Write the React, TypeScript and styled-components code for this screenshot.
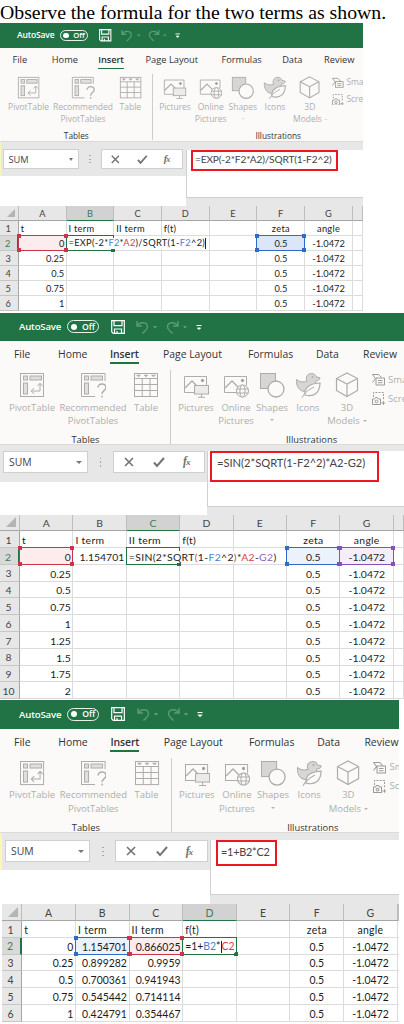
import React from "react";
import styled, { createGlobalStyle, css } from "styled-components";

/* Every sheet sets --u, the length of one design unit, so the same parts serve both zoom levels. */
const u = (n: number) => `calc(var(--u) * ${n})`;

const UI = `"Open Sans", "Noto Sans", sans-serif`;
const CELL = `Lato, "Open Sans", sans-serif`;
const GREEN = "#217346";
const RED = "#c9364a";
const BLUE = "#2f6bc9";
const PURPLE = "#8552b8";

const GlobalStyle = createGlobalStyle`
  body { margin: 0; background: #fff; overflow: hidden; }
  * { box-sizing: border-box; }
`;

const Page = styled.main`
  width: 404px;
  height: 1024px;
  overflow: hidden;
  display: flex;
  flex-direction: column;
  align-items: flex-start;
`;

const Heading = styled.h1`
  margin: 0;
  padding-left: 0;
  height: 22.7px;
  font: 400 19.8px/24px "Liberation Serif", serif;
  color: #000;
  white-space: nowrap;
`;

const Sheet = styled.section<{ $unit: number; $width: number; $height: number }>`
  --u: ${(p) => p.$unit}px;
  width: ${(p) => p.$width}px;
  height: ${(p) => p.$height}px;
  flex: none;
  overflow: hidden;
  font-family: ${UI};
`;

/* Title bar */
const TitleBar = styled.header`
  height: ${u(28.5)};
  background: ${GREEN};
  display: flex;
  align-items: center;
  padding-left: ${u(19)};
  color: #fff;
  font-size: ${u(9.6)};
  white-space: nowrap;
`;
const SaveLabel = styled.span`
  width: ${u(48)};
  font-weight: 600;
  letter-spacing: -0.02em;
`;
const Toggle = styled.span`
  width: ${u(32)};
  height: ${u(13)};
  border: 1px solid #e8f1ec;
  border-radius: ${u(7)};
  display: flex;
  align-items: center;
  gap: ${u(5)};
  padding-left: ${u(3)};
  font-size: ${u(8.6)};
  line-height: 1;
  font-weight: 600;
  margin-right: ${u(12)};
`;
const Knob = styled.i`
  width: ${u(6)};
  height: ${u(6)};
  border-radius: 50%;
  background: #fff;
`;
const BarIcon = styled.svg<{ $w: number; $gap: number; $dim?: boolean }>`
  width: ${(p) => u(p.$w)};
  height: ${u(14)};
  margin-right: ${(p) => u(p.$gap)};
  flex: none;
  fill: none;
  stroke: ${(p) => (p.$dim ? "#5a9a77" : "#fff")};
`;

/* Ribbon */
const Ribbon = styled.div<{ $h: number; $line?: boolean }>`
  height: ${(p) => p.$h}px;
  background: #fbfaf9;
  border-bottom: 1px solid ${(p) => (p.$line ? "#e3e0a4" : "#dcdbda")};
  display: flex;
  flex-direction: column;
`;
const Tabs = styled.nav`
  display: grid;
  grid-template-columns: ${[44, 52, 53, 85, 68, 47, 60].map(u).join(" ")};
  padding-left: ${u(14)};
  height: ${u(29)};
  font-size: ${u(10.4)};
  color: #333;
  white-space: nowrap;
`;
const Tab = styled.span<{ $active?: boolean }>`
  justify-self: start;
  height: ${u(23)};
  line-height: ${u(27)};
  border-bottom: ${u(2)} solid ${(p) => (p.$active ? GREEN : "transparent")};
  font-weight: ${(p) => (p.$active ? 600 : 400)};
  letter-spacing: ${(p) => (p.$active ? "-0.01em" : "0")};
`;
const Groups = styled.div`
  display: flex;
  flex: 1;
`;
const Group = styled.div<{ $w: number; $rule?: boolean }>`
  width: ${(p) => u(p.$w)};
  flex: none;
  height: ${u(74)};
  display: flex;
  flex-direction: column;
  border-right: ${(p) => (p.$rule ? "1px solid #cdcccb" : "0")};
`;
const Tools = styled.div`
  display: flex;
  height: ${u(63.2)};
  flex: none;
  padding-top: ${u(2)};
`;
const Tool = styled.div<{ $w: number; $ml: number }>`
  width: ${(p) => u(p.$w)};
  margin-left: ${(p) => u(p.$ml)};
  flex: none;
  display: flex;
  flex-direction: column;
  align-items: center;
  font-size: ${u(9.5)};
  line-height: ${u(13.4)};
  color: #b0aeac;
  white-space: nowrap;
`;
const ToolIcon = styled.svg`
  width: ${u(26)};
  height: ${u(26)};
  margin-bottom: ${u(2.4)};
  flex: none;
  fill: none;
  stroke: #aeacaa;
`;
const GroupName = styled.div<{ $indent: number }>`
  flex: none;
  padding-left: ${(p) => u(p.$indent)};
  font-size: ${u(9.3)};
  line-height: ${u(14)};
  color: #333;
`;
const SmallTools = styled.div`
  margin-left: ${u(4)};
  display: flex;
  flex-direction: column;
`;
const SmallTool = styled.div`
  display: flex;
  align-items: center;
  gap: ${u(3)};
  height: ${u(19)};
  margin-top: ${u(-1)};
  padding-bottom: ${u(2)};
  font-size: ${u(9.5)};
  line-height: 1;
  color: #b0aeac;
  & + & { margin-top: 0; }
`;
const SmallIcon = styled.svg`
  width: ${u(13)};
  height: ${u(13)};
  flex: none;
  fill: none;
  stroke: #9d9b99;
`;
const Arrow = styled.i`
  display: inline-block;
  border: ${u(2)} solid transparent;
  border-top-color: #b3b1af;
  border-bottom: 0;
  margin-left: ${u(3)};
  vertical-align: middle;
`;
const ArrowBelow = styled(Arrow)`
  margin: ${u(5)} 0 0;
`;

/* Formula bar */
const FormulaZone = styled.div<{ $h: number; $left: number }>`
  height: ${(p) => p.$h}px;
  display: grid;
  grid-template-columns: ${(p) => p.$left}px 1fr;
`;
const Controls = styled.div<{ $h: number; $pad: number; $top: number; $strip: number }>`
  height: ${(p) => p.$h}px;
  padding-left: ${(p) => p.$pad - p.$strip}px;
  padding-top: ${(p) => p.$top}px;
  border-left: ${(p) => p.$strip}px solid #fbf7b4;
  background: #e8e7e7;
  display: flex;
`;
const NameBox = styled.div`
  width: ${u(85)};
  height: ${u(22)};
  border: 1px solid #d0cfcf;
  background: #fff;
  display: flex;
  align-items: center;
  justify-content: space-between;
  padding: 0 ${u(5)};
  font-size: ${u(10.4)};
  color: #444;
`;
const NameArrow = styled.i`
  border: ${u(3)} solid transparent;
  border-top: ${u(3.5)} solid #777;
  border-bottom: 0;
`;
const Dots = styled.div`
  width: ${u(25)};
  height: ${u(22)};
  display: flex;
  flex-direction: column;
  align-items: center;
  justify-content: center;
  gap: ${u(2.4)};
  i { width: 1.4px; height: 1.4px; background: #aaa; }
`;
const Buttons = styled.div`
  width: ${u(92)};
  height: ${u(22)};
  border: 1px solid #d0cfcf;
  background: #fff;
  display: flex;
  align-items: center;
  padding-left: ${u(9)};
  gap: ${u(18)};
`;
const Glyph = styled.svg`
  width: ${u(12)};
  height: ${u(12)};
  fill: none;
  stroke: #737373;
  stroke-width: 1.6;
`;
const Fx = styled.span`
  font: italic 700 ${u(11.5)}/1 "Liberation Serif", serif;
  color: #707070;
  letter-spacing: -0.08em;
  small { font-size: 0.8em; }
`;
const InputSide = styled.div<{ $top: number; $bottom: number }>`
  background: #e8e7e7;
  padding: ${(p) => `${p.$top}px 0 ${p.$bottom}px`};
`;
const Input = styled.div<{ $pad: number }>`
  height: 100%;
  background: #fff;
  border-left: 1px solid #d0cfcf;
  border-bottom: 1px solid #cfcfcf;
  padding-left: ${(p) => p.$pad}px;
`;
const Marked = styled.div<{ $w: number; $h: number; $size: number; $pad: number; $indent: number; $ls: number }>`
  width: ${(p) => p.$w}px;
  height: ${(p) => p.$h}px;
  border: 2px solid #ee1620;
  padding: ${(p) => p.$pad}px 0 0 ${(p) => p.$indent}px;
  font: 400 ${(p) => p.$size}px/14px ${CELL};
  letter-spacing: ${(p) => p.$ls}px;
  color: #444;
  white-space: nowrap;
`;

/* Cells */
const Grid = styled.div<{ $head: number; $left: number }>`
  --cols: ${(p) => p.$head}px repeat(7, ${u(53.4)}) 1fr;
  margin-left: ${(p) => p.$left}px;
  font-family: ${CELL};
  font-size: ${u(10.4)};
  color: #1c1c1c;
`;
const HeadRow = styled.div<{ $h: number }>`
  display: grid;
  grid-template-columns: var(--cols);
  height: ${(p) => p.$h}px;
  background: #e8e7e7;
`;
const ColHead = styled.div<{ $on?: boolean }>`
  display: flex;
  align-items: center;
  justify-content: center;
  padding-top: ${u(1)};
  border-right: 1px solid #bdbdbd;
  border-bottom: ${(p) => (p.$on ? `1.5px solid ${GREEN}` : "1px solid #a6a6a6")};
  background: ${(p) => (p.$on ? "#d2d2d2" : "transparent")};
  color: ${(p) => (p.$on ? "#3b7d58" : "#444")};
`;
const Corner = styled(ColHead)`
  justify-content: flex-end;
  align-items: flex-end;
  padding: 0 ${u(3)} ${u(3)} 0;
  i { border: ${u(5)} solid; border-color: transparent #b4b4b4 #b4b4b4 transparent; }
`;
const Row = styled.div`
  display: grid;
  grid-template-columns: var(--cols);
  height: ${u(16.8)};
`;
const RowHead = styled.div<{ $on?: boolean }>`
  display: flex;
  align-items: center;
  justify-content: center;
  padding: ${u(1.4)} ${u(2)} 0 0;
  background: ${(p) => (p.$on ? "#d9d9d9" : "#e8e7e7")};
  border-right: ${(p) => (p.$on ? `2px solid ${GREEN}` : "1px solid #a6a6a6")};
  border-bottom: 1px solid #c6c6c6;
  color: ${(p) => (p.$on ? "#3b7d58" : "#444")};
`;
type Align = "left" | "center" | "right";
const Cell = styled.div<{ $align: Align; $label?: boolean }>`
  position: relative;
  min-width: 0;
  display: flex;
  align-items: center;
  justify-content: ${(p) => ({ left: "flex-start", center: "center", right: "flex-end" })[p.$align]};
  padding: ${u(1.8)} ${u(1.6)} 0 ${u(2)};
  letter-spacing: ${(p) => (p.$label ? "0.03em" : "0")};
  border-right: 1px solid #dcdcdc;
  border-bottom: 1px solid #dcdcdc;
  white-space: nowrap;
`;
const Outline = styled.div<{ $color: string; $fill: string }>`
  position: absolute;
  z-index: 1;
  inset: -1px;
  border: 1.6px solid ${(p) => p.$color};
  background: ${(p) => p.$fill};
`;
const Handle = styled.i<{ $color: string; $at: "tl" | "tr" | "bl" | "br" }>`
  position: absolute;
  z-index: 2;
  width: 4px;
  height: 4px;
  background: ${(p) => p.$color};
  ${(p) => (p.$at[0] === "t" ? css`top: -2px;` : css`bottom: -2px;`)}
  ${(p) => (p.$at[1] === "l" ? css`left: -2px;` : css`right: -2px;`)}
`;
const Over = styled.span`
  position: relative;
  z-index: 3;
`;
const Editing = styled.span<{ $ls: number }>`
  position: relative;
  z-index: 4;
  background: #fff;
  line-height: ${u(12)};
  letter-spacing: ${(p) => p.$ls}px;
`;
const Ink = styled.span<{ $c: string }>`
  color: ${(p) => p.$c};
`;
const Caret = styled.i`
  display: inline-block;
  width: 1px;
  height: ${u(12)};
  background: #222;
  vertical-align: middle;
`;

const PivotIcon = ({ ask }: { ask?: boolean }) => (
  <ToolIcon viewBox="0 0 26 26">
    {ask ? <path d="M25 9V1.5H1.5V24.5H15" /> : <rect x="1.5" y="1.5" width="23" height="23" />}
    <rect x="4.5" y="4" width="4" height="4" fill="#e0dfde" />
    <rect x="11" y="4" width="11.5" height="4" fill="#e0dfde" />
    <rect x="4.5" y="11" width="4" height="11" fill="#e0dfde" />
    {ask ? (
      <path d="M18 15.5c0-5 8-4.5 8 0 0 3.2-4 3-4 6.5M22 23.5v2" strokeWidth="1.4" />
    ) : (
      <path d="M21 11.5v7.5h-8.5M18.5 14l2.5-2.8 2.5 2.8M15.2 16l-3 3 3 3" />
    )}
  </ToolIcon>
);
const TableIcon = () => (
  <ToolIcon viewBox="0 0 26 26">
    <rect x="1.5" y="1.5" width="23" height="23" />
    <path d="M1.5 6.5h23M1.5 12.5h23M1.5 18.5h23M9.2 6.5v18M17 6.5v18" />
    <path d="M3.5 3h4l-2 2zM11 3h4l-2 2zM18.5 3h4l-2 2z" fill="#aeacaa" strokeWidth=".5" />
  </ToolIcon>
);
const PictureIcon = ({ online }: { online?: boolean }) => (
  <ToolIcon viewBox="0 0 26 26">
    <path d="M14 20.5H1.5v-16h22v9" />
    <path d="M2 16l7-7 6.5 6.5" strokeWidth="1.3" />
    <circle cx="19.5" cy="8.5" r="1.2" fill="#8f8d8b" />
    {online ? (
      <g fill="#fbfaf9">
        <circle cx="19.5" cy="19" r="6" />
        <ellipse cx="19.5" cy="19" rx="2.6" ry="6" />
        <path d="M13.5 17h12M13.5 21h12" />
      </g>
    ) : (
      <g>
        <rect x="11.5" y="13.5" width="14" height="8.5" fill="#ecebea" />
        <path d="M18.5 22v3M15 25.3h7" />
      </g>
    )}
  </ToolIcon>
);
const ShapesIcon = () => (
  <ToolIcon viewBox="0 0 26 26">
    <rect x="1.5" y="1.5" width="15" height="15" fill="#d7d6d5" />
    <circle cx="17" cy="17" r="8" fill="#fbfaf9" strokeWidth="1.3" />
  </ToolIcon>
);
const DuckIcon = () => (
  <ToolIcon viewBox="0 0 26 26">
    <path
      d="M1.5 7.5c3 2.500 7 3 10.500 1.800-2-4 .5-7.800 4.500-7.800 3 0 4.500 2 4.800 3.500l3.700.8c-.4 2.200-2 3-4.200 3.200-1 2 .7 2.500.2 6L9 19.500C4 18.500 1 14 1.500 7.500z"
      fill="#d7d6d5"
    />
    <path d="M25 11c-7 .5-16 2-15 12 9 2.500 15-2.500 15-12z" fill="#fbfaf9" strokeWidth="1.2" />
    <path d="M7 26c2-5 6-8 12-11" />
    <circle cx="17.500" cy="5" r=".6" />
  </ToolIcon>
);
const CubeIcon = () => (
  <ToolIcon viewBox="0 0 26 26">
    <path d="M13 1l10.500 5.500v12L13 24.500 2.500 18.500v-12zM2.500 6.500L13 12l10.500-5.500M13 12v12.500" strokeWidth="1.2" />
  </ToolIcon>
);

const Chrome = ({ ribbonHeight, line }: { ribbonHeight: number; line?: boolean }) => (
  <>
    <TitleBar>
      <SaveLabel>AutoSave</SaveLabel>
      <Toggle>
        <Knob />
        Off
      </Toggle>
      <BarIcon viewBox="0 0 14 14" $w={14} $gap={11}>
        <path d="M.7.700h12.600v12.600H2.200L.7 11.800zM3 .7v5h8v-5M3.500 13.300V9h7v4.300M6 11v2" strokeWidth="1.2" />
      </BarIcon>
      <BarIcon viewBox="0 0 13 14" $w={13} $gap={4} $dim>
        <path d="M1 1v5h5M1.200 6C4 1 11.500 2 11.500 7c0 3-3 4-5 6.500" strokeWidth="1.4" />
      </BarIcon>
      <BarIcon viewBox="0 0 4 14" $w={4} $gap={9} $dim>
        <path d="M.5 6.500h3L2 8z" />
      </BarIcon>
      <BarIcon viewBox="0 0 13 14" $w={13} $gap={4} $dim>
        <path d="M12 1v5H7M11.800 6C9 1 1.500 2 1.500 7c0 3 3 4 5 6.500" strokeWidth="1.4" />
      </BarIcon>
      <BarIcon viewBox="0 0 4 14" $w={4} $gap={9} $dim>
        <path d="M.5 6.500h3L2 8z" />
      </BarIcon>
      <BarIcon viewBox="0 0 6 14" $w={6} $gap={0}>
        <path d="M.5 5.500h5" />
        <path d="M1.500 8h3L3 9.500z" fill="#fff" />
      </BarIcon>
    </TitleBar>
    <Ribbon $h={ribbonHeight} $line={line}>
      <Tabs>
        <Tab>File</Tab>
        <Tab>Home</Tab>
        <Tab $active>Insert</Tab>
        <Tab>Page Layout</Tab>
        <Tab>Formulas</Tab>
        <Tab>Data</Tab>
        <Tab>Review</Tab>
      </Tabs>
      <Groups>
        <Group $w={171} $rule>
          <Tools>
            <Tool $w={48} $ml={8}>
              <PivotIcon />
              PivotTable
            </Tool>
            <Tool $w={70} $ml={2}>
              <PivotIcon ask />
              <span>Recommended</span>
              <span>PivotTables</span>
            </Tool>
            <Tool $w={26} $ml={5}>
              <TableIcon />
              Table
            </Tool>
          </Tools>
          <GroupName $indent={71.5}>Tables</GroupName>
        </Group>
        <Group $w={260}>
          <Tools>
            <Tool $w={36} $ml={7}>
              <PictureIcon />
              Pictures
            </Tool>
            <Tool $w={36} $ml={4}>
              <PictureIcon online />
              <span>Online</span>
              <span>Pictures</span>
            </Tool>
            <Tool $w={34} $ml={1}>
              <ShapesIcon />
              <span>Shapes</span>
              <ArrowBelow />
            </Tool>
            <Tool $w={28} $ml={5}>
              <DuckIcon />
              Icons
            </Tool>
            <Tool $w={42} $ml={4}>
              <CubeIcon />
              <span>3D</span>
              <span>
                Models
                <Arrow />
              </span>
            </Tool>
            <SmallTools>
              <SmallTool>
                <SmallIcon viewBox="0 0 13 13">
                  <path d="M.5 1.500h6l3 3M.5 9.500l3-4-3-4M4 5h8.500v7H4z" />
                  <path d="M6 7.500h4.500M6 9.700h4.500" />
                </SmallIcon>
                Sma
              </SmallTool>
              <SmallTool>
                <SmallIcon viewBox="0 0 13 13">
                  <path d="M1.500 5V.5h10V8" strokeDasharray="2 1.200" />
                  <path d="M.5 7h2l1-1.500h2L6.500 7h2v5.500h-8zM9.500 11h3.500M11.500 9.200v3.600" />
                  <circle cx="4.500" cy="9.500" r="1.400" />
                </SmallIcon>
                Scre
              </SmallTool>
            </SmallTools>
          </Tools>
          <GroupName $indent={115}>Illustrations</GroupName>
        </Group>
      </Groups>
    </Ribbon>
  </>
);

interface Bar {
  height: number;
  left: number;
  controls: number;
  pad: number;
  padTop: number;
  strip: number;
  top: number;
  bottom: number;
  inset: number;
  box: [number, number];
  size: number;
  textTop: number;
  indent: number;
  ls: number;
  text: string;
}
const FormulaBar = ({ b }: { b: Bar }) => (
  <FormulaZone $h={b.height} $left={b.left}>
    <Controls $h={b.controls} $pad={b.pad} $top={b.padTop} $strip={b.strip}>
      <NameBox>
        SUM
        <NameArrow />
      </NameBox>
      <Dots>
        <i />
        <i />
        <i />
      </Dots>
      <Buttons>
        <Glyph viewBox="0 0 12 12">
          <path d="M2 2l8 8M10 2l-8 8" />
        </Glyph>
        <Glyph viewBox="0 0 12 12">
          <path d="M1 6.500l3 3.500 7-8" strokeWidth="2" />
        </Glyph>
        <Fx>
          f<small>x</small>
        </Fx>
      </Buttons>
    </Controls>
    <InputSide $top={b.top} $bottom={b.bottom}>
      <Input $pad={b.inset}>
        <Marked $w={b.box[0]} $h={b.box[1]} $size={b.size} $pad={b.textTop} $indent={b.indent} $ls={b.ls}>
          {b.text}
        </Marked>
      </Input>
    </InputSide>
  </FormulaZone>
);

interface Mark {
  color: string;
  fill: string;
  handles: ("tl" | "tr" | "bl" | "br")[];
}
const ALL: Mark["handles"] = ["tl", "tr", "bl", "br"];
const red: Mark = { color: RED, fill: "#fdeced", handles: ALL };
const blue: Mark = { color: BLUE, fill: "#ebf2fc", handles: ALL };
const blueDeep: Mark = { ...blue, fill: "#dbe6f8" };
const purple: Mark = { color: PURPLE, fill: "#f4eefa", handles: ALL };
const active: Mark = { color: GREEN, fill: "#fff", handles: ["br"] };

interface GridProps {
  head: number;
  left: number;
  headHeight: number;
  activeCol: string;
  rows: string[][];
  marks: Record<number, Mark>;
  editAt: number;
  edit: React.ReactNode;
  editSpacing: number;
}
const LETTERS = ["A", "B", "C", "D", "E", "F", "G"];
const Cells = (g: GridProps) => (
  <Grid $head={g.head} $left={g.left}>
    <HeadRow $h={g.headHeight}>
      <Corner>
        <i />
      </Corner>
      {LETTERS.map((l) => (
        <ColHead key={l} $on={l === g.activeCol}>
          {l}
        </ColHead>
      ))}
      <ColHead />
    </HeadRow>
    {g.rows.map((row, r) => (
      <Row key={r}>
        <RowHead $on={r === 1}>{r + 1}</RowHead>
        {LETTERS.map((l, c) => {
          const mark = r === 1 ? g.marks[c] : undefined;
          const align: Align = c > 4 ? "center" : r === 0 || (r === 1 && c === g.editAt) ? "left" : "right";
          return (
            <Cell key={l} $align={align} $label={r === 0}>
              {mark && <Outline $color={mark.color} $fill={mark.fill} />}
              {mark?.handles.map((h) => <Handle key={h} $color={mark.color} $at={h} />)}
              {r === 1 && c === g.editAt ? <Editing $ls={g.editSpacing}>{g.edit}</Editing> : row[c] && <Over>{row[c]}</Over>}
            </Cell>
          );
        })}
        <Cell $align="left" />
      </Row>
    ))}
  </Grid>
);

const HEAD = ["t", "I term", "II term", "f(t)", "", "zeta", "angle"];
const line = (t: string, i = "", ii = "") => [t, i, ii, "", "", "0.5", "-1.0472"];

export default function App() {
  return (
    <>
      <GlobalStyle />
      <Page>
        <Heading>Observe the formula for the two terms as shown.</Heading>
        <Sheet $unit={0.893} $width={363} $height={290}>
          <Chrome ribbonHeight={93.8} line />
          <FormulaBar
            b={{
              height: 63.8, left: 186, controls: 34, pad: 3, padTop: 7.5, strip: 1, top: 8, bottom: 8, inset: 4,
              box: [147, 21], size: 10.2, textTop: 0.5, indent: 2, ls: -0.18, text: "=EXP(-2*F2*A2)/SQRT(1-F2^2)",
            }}
          />
          <Cells
            head={19} left={0} headHeight={15} activeCol="B"
            rows={[HEAD, line("0"), line("0.25"), line("0.5"), line("0.75"), line("1")]}
            marks={{ 0: red, 1: active, 5: blueDeep }}
            editAt={1}
            editSpacing={0.3}
            edit={
              <>
                =EXP(-2*<Ink $c="#4a7fd6">F2</Ink>*<Ink $c="#d2414e">A2</Ink>)/SQRT(1-<Ink $c="#4a7fd6">F2</Ink>^2)
                <Caret />
              </>
            }
          />
        </Sheet>
        <Sheet $unit={1} $width={404} $height={387.3}>
          <Chrome ribbonHeight={104} />
          <FormulaBar
            b={{
              height: 69.5, left: 207, controls: 37, pad: 3, padTop: 6, strip: 0, top: 6, bottom: 8, inset: 2,
              box: [169, 31], size: 11.2, textTop: 2.5, indent: 5, ls: -0.04, text: "=SIN(2*SQRT(1-F2^2)*A2-G2)",
            }}
          />
          <Cells
            head={20} left={0} headHeight={16.6} activeCol="C"
            rows={[HEAD, line("0", "1.154701"), ...["0.25", "0.5", "0.75", "1", "1.25", "1.5", "1.75", "2"].map((t) => line(t))]}
            marks={{ 0: red, 2: active, 5: blue, 6: purple }}
            editAt={2}
            editSpacing={0.35}
            edit={
              <>
                =SIN(2*SQRT<Ink $c="#d2414e">(</Ink>1-<Ink $c="#4a7fd6">F2</Ink>^2<Ink $c="#d2414e">)</Ink>*
                <Ink $c="#d2414e">A2</Ink>-<Ink $c="#9560c4">G2</Ink>)
              </>
            }
          />
        </Sheet>
        <Sheet $unit={1.004} $width={399} $height={324}>
          <Chrome ribbonHeight={104.3} />
          <FormulaBar
            b={{
              height: 71.5, left: 210, controls: 37.5, pad: 5, padTop: 7.5, strip: 2, top: 7, bottom: 9, inset: 5,
              box: [61, 26], size: 10.9, textTop: 3, indent: 3, ls: -0.25, text: "=1+B2*C2",
            }}
          />
          <Cells
            head={20.3} left={2} headHeight={16.5} activeCol="D"
            rows={[
              HEAD,
              line("0", "1.154701", "0.866025"),
              line("0.25", "0.899282", "0.9959"),
              line("0.5", "0.700361", "0.941943"),
              line("0.75", "0.545442", "0.714114"),
              line("1", "0.424791", "0.354467"),
            ]}
            marks={{ 1: blue, 2: red, 3: active }}
            editAt={3}
            editSpacing={0}
            edit={
              <>
                =1+<Ink $c="#4a7fd6">B2</Ink>*<Caret />
                <Ink $c="#d2414e">C2</Ink>
              </>
            }
          />
        </Sheet>
      </Page>
    </>
  );
}
